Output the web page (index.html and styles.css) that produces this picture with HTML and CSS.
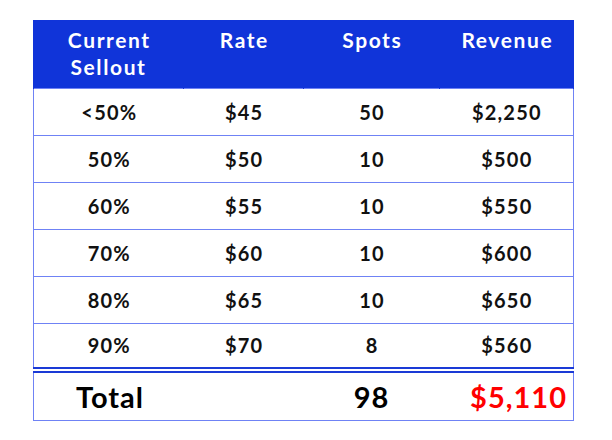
FILE: index.html
```html
<!DOCTYPE html>
<html>
<head>
<meta charset="utf-8">
<link rel="stylesheet" href="styles.css">
</head>
<body>
<table class="rates">
  <colgroup>
    <col class="c1"><col class="c2"><col class="c3"><col class="c4">
  </colgroup>
  <thead>
    <tr><th>Current<br>Sellout</th><th>Rate</th><th>Spots</th><th>Revenue</th></tr>
  </thead>
  <tbody>
    <tr><td>&lt;50%</td><td>$45</td><td>50</td><td>$2,250</td></tr>
    <tr><td>50%</td><td>$50</td><td>10</td><td>$500</td></tr>
    <tr><td>60%</td><td>$55</td><td>10</td><td>$550</td></tr>
    <tr><td>70%</td><td>$60</td><td>10</td><td>$600</td></tr>
    <tr><td>80%</td><td>$65</td><td>10</td><td>$650</td></tr>
    <tr class="last"><td>90%</td><td>$70</td><td>8</td><td>$560</td></tr>
  </tbody>
  <tfoot>
    <tr><td class="label">Total</td><td></td><td>98</td><td class="sum">$5,110</td></tr>
  </tfoot>
</table>
</body>
</html>
```
FILE: styles.css
```css
html, body {
  margin: 0;
  background: #ffffff;
}
body {
  padding: 20px 0 0 33px;
  font-family: Lato, "Open Sans", sans-serif;
}
.rates {
  border-collapse: collapse;
  width: 540px;
  table-layout: fixed;
}
.c1 { width: 150px; }
.c2 { width: 120px; }
.c3 { width: 136px; }
.c4 { width: 134px; }
.rates th {
  background: #1034d9;
  color: #ffffff;
  font-weight: 700;
  font-size: 21px;
  letter-spacing: 1.6px;
  text-indent: 1.6px;
  line-height: 27px;
  height: 68px;
  box-sizing: border-box;
  padding: 6px 0 0;
  vertical-align: top;
  border-left: 1px solid #1034d9;
  border-right: 1px solid #1034d9;
}
.rates tbody td {
  height: 47px;
  box-sizing: border-box;
  text-align: center;
  font-weight: 700;
  font-size: 20px;
  letter-spacing: 1.2px;
  text-indent: 1.2px;
  color: #111111;
  padding: 0;
  border-top: 1px solid #6f82f5;
  border-bottom: 1px solid #6f82f5;
}
.rates tbody td:first-child { border-left: 1px solid #6f82f5; }
.rates tbody td:last-child { border-right: 1px solid #6f82f5; }
.rates tbody tr.last td {
  border-bottom: 6px double #1a3ad6;
}
.rates tfoot td {
  height: 50px;
  box-sizing: border-box;
  text-align: center;
  font-weight: 700;
  font-size: 29px;
  letter-spacing: 1px;
  color: #000000;
  padding: 0;
  border-bottom: 1px solid #6f82f5;
}
.rates tfoot td:first-child { border-left: 1px solid #6f82f5; }
.rates tfoot td:last-child { border-right: 1px solid #6f82f5; }
.rates tfoot .label { text-align: left; padding-left: 42px; }
.rates tfoot .sum { color: #ff0000; text-align: right; padding-right: 6px; }
```
